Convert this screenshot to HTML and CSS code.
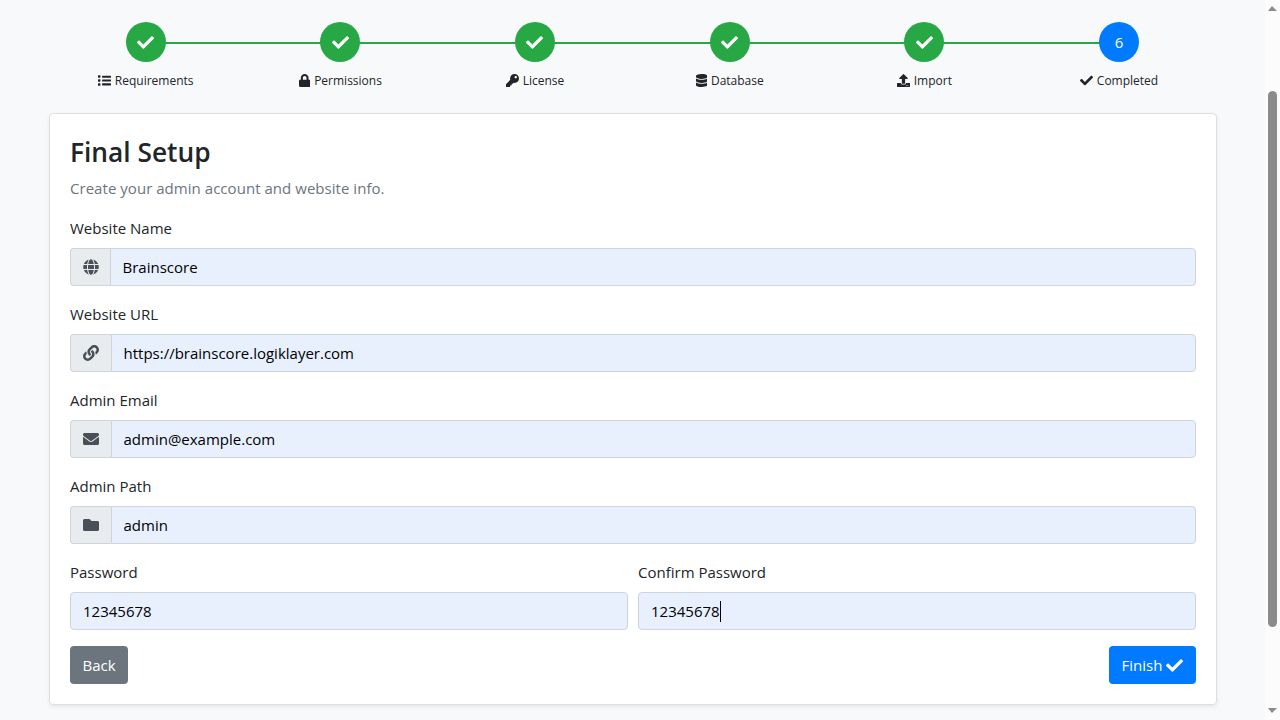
FILE: index.html
```html
<!DOCTYPE html>
<html lang="en">
<head>
  <meta charset="UTF-8" />
  <title>Final Setup</title>
  <link rel="stylesheet" href="styles.css">
</head>
<body>

  <!-- Icons -->
  <svg class="sprite" width="0" height="0">
    <symbol id="check" viewBox="0 0 512 512"><path d="M173.898 439.404l-166.4-166.4c-9.997-9.997-9.997-26.206 0-36.204l36.203-36.204c9.997-9.998 26.207-9.998 36.204 0L192 312.69 432.095 72.596c9.997-9.997 26.207-9.997 36.204 0l36.203 36.204c9.997 9.997 9.997 26.206 0 36.204l-294.4 294.401c-9.998 9.997-26.207 9.997-36.204-.001z"/></symbol>
    <symbol id="list" viewBox="0 0 512 512"><path d="M80 368H16a16 16 0 0 0-16 16v64a16 16 0 0 0 16 16h64a16 16 0 0 0 16-16v-64a16 16 0 0 0-16-16zm0-320H16A16 16 0 0 0 0 64v64a16 16 0 0 0 16 16h64a16 16 0 0 0 16-16V64a16 16 0 0 0-16-16zm0 160H16a16 16 0 0 0-16 16v64a16 16 0 0 0 16 16h64a16 16 0 0 0 16-16v-64a16 16 0 0 0-16-16zm416 160H176a16 16 0 0 0-16 16v48a16 16 0 0 0 16 16h320a16 16 0 0 0 16-16v-48a16 16 0 0 0-16-16zm0-304H176a16 16 0 0 0-16 16v48a16 16 0 0 0 16 16h320a16 16 0 0 0 16-16V80a16 16 0 0 0-16-16zm0 152H176a16 16 0 0 0-16 16v48a16 16 0 0 0 16 16h320a16 16 0 0 0 16-16v-48a16 16 0 0 0-16-16z"/></symbol>
    <symbol id="lock" viewBox="0 0 448 512"><path d="M400 224h-24v-72C376 68.2 307.8 0 224 0S72 68.2 72 152v72H48c-26.5 0-48 21.5-48 48v192c0 26.5 21.5 48 48 48h352c26.5 0 48-21.5 48-48V272c0-26.5-21.5-48-48-48zm-104 0H152v-72c0-39.7 32.3-72 72-72s72 32.3 72 72v72z"/></symbol>
    <symbol id="key" viewBox="0 0 512 512"><path d="M512 176.001C512 273.203 433.202 352 336 352c-11.22 0-22.19-1.062-32.827-3.069l-24.012 27.014A23.999 23.999 0 0 1 261.223 384H224v40c0 13.255-10.745 24-24 24h-40v40c0 13.255-10.745 24-24 24H24c-13.255 0-24-10.745-24-24v-78.059c0-6.365 2.529-12.47 7.029-16.971l161.802-161.802C163.108 213.814 160 195.271 160 176 160 78.798 238.797.001 335.999 0 433.488-.001 512 78.511 512 176.001zM336 128c0 26.51 21.49 48 48 48s48-21.49 48-48-21.49-48-48-48-48 21.49-48 48z"/></symbol>
    <symbol id="database" viewBox="0 0 448 512"><path d="M448 73.143v45.714C448 159.143 347.667 192 224 192S0 159.143 0 118.857V73.143C0 32.857 100.333 0 224 0s224 32.857 224 73.143zM448 176v102.857C448 319.143 347.667 352 224 352S0 319.143 0 278.857V176c48.125 33.143 136.208 48.572 224 48.572S399.874 209.143 448 176zm0 160v102.857C448 479.143 347.667 512 224 512S0 479.143 0 438.857V336c48.125 33.143 136.208 48.572 224 48.572S399.874 369.143 448 336z"/></symbol>
    <symbol id="upload" viewBox="0 0 512 512"><path d="M296 384h-80c-13.3 0-24-10.7-24-24V192h-87.7c-17.8 0-26.7-21.5-14.1-34.1L242.3 5.7c7.5-7.5 19.8-7.5 27.3 0l152.2 152.2c12.6 12.6 3.7 34.1-14.1 34.1H320v168c0 13.3-10.7 24-24 24zm216-8v112c0 13.3-10.7 24-24 24H24c-13.3 0-24-10.7-24-24V376c0-13.3 10.7-24 24-24h136v8c0 30.9 25.1 56 56 56h80c30.9 0 56-25.1 56-56v-8h136c13.3 0 24 10.7 24 24zm-124 88c0-11-9-20-20-20s-20 9-20 20 9 20 20 20 20-9 20-20zm64 0c0-11-9-20-20-20s-20 9-20 20 9 20 20 20 20-9 20-20z"/></symbol>
    <symbol id="globe" viewBox="0 0 496 512"><path d="M336.5 160C322 70.7 287.8 8 248 8s-74 62.7-88.5 152h177zM152 256c0 22.2 1.2 43.5 3.3 64h185.3c2.1-20.5 3.3-41.8 3.3-64s-1.2-43.5-3.3-64H155.3c-2.1 20.5-3.3 41.8-3.3 64zm324.7-96c-28.6-67.9-86.5-120.4-158-141.6 24.4 33.8 41.2 84.7 50 141.6h108zM177.2 18.4C105.8 39.6 47.8 92.1 19.3 160h108c8.7-56.9 25.5-107.8 49.9-141.6zM487.4 192H372.7c2.1 21 3.3 42.5 3.3 64s-1.2 43-3.3 64h114.6c5.5-20.5 8.6-41.8 8.6-64s-3.1-43.5-8.5-64zM120 256c0-21.5 1.2-43 3.3-64H8.6C3.2 212.5 0 233.8 0 256s3.2 43.5 8.6 64h114.6c-2-21-3.2-42.5-3.2-64zm39.5 96c14.5 89.3 48.7 152 88.5 152s74-62.7 88.5-152h-177zm159.3 141.6c71.4-21.2 129.4-73.7 158-141.6h-108c-8.8 56.9-25.6 107.8-50 141.6zM19.3 352c28.6 67.9 86.5 120.4 158 141.6-24.4-33.8-41.2-84.7-50-141.6h-108z"/></symbol>
    <symbol id="link" viewBox="0 0 512 512"><path d="M326.612 185.391c59.747 59.809 58.927 155.698.36 214.59-.11.12-.24.25-.36.37l-67.2 67.2c-59.27 59.27-155.699 59.262-214.96 0-59.27-59.26-59.27-155.7 0-214.96l37.106-37.106c9.84-9.84 26.786-3.3 27.294 10.606.648 17.722 3.826 35.527 9.69 52.721 1.986 5.822.567 12.262-3.783 16.612l-13.087 13.087c-28.026 28.026-28.905 73.66-1.155 101.96 28.024 28.579 74.086 28.749 102.325.51l67.2-67.19c28.191-28.191 28.073-73.757 0-101.83-3.701-3.694-7.429-6.564-10.341-8.569a16.037 16.037 0 0 1-6.947-12.606c-.396-10.567 3.348-21.456 11.698-29.806l21.054-21.055c5.521-5.521 14.182-6.199 20.584-1.731a152.482 152.482 0 0 1 20.522 17.197zM467.547 44.449c-59.261-59.262-155.69-59.27-214.96 0l-67.2 67.2c-.12.12-.25.25-.36.37-58.566 58.892-59.387 154.781.36 214.59a152.454 152.454 0 0 0 20.521 17.196c6.402 4.468 15.064 3.789 20.584-1.731l21.054-21.055c8.35-8.35 12.094-19.239 11.698-29.806a16.037 16.037 0 0 0-6.947-12.606c-2.912-2.005-6.64-4.875-10.341-8.569-28.073-28.073-28.191-73.639 0-101.83l67.2-67.19c28.239-28.239 74.3-28.069 102.325.51 27.75 28.3 26.872 73.934-1.155 101.96l-13.087 13.087c-4.35 4.35-5.769 10.79-3.783 16.612 5.864 17.194 9.042 34.999 9.69 52.721.509 13.906 17.454 20.446 27.294 10.606l37.106-37.106c59.271-59.259 59.271-155.699.001-214.959z"/></symbol>
    <symbol id="envelope" viewBox="0 0 512 512"><path d="M502.3 190.8c3.9-3.1 9.7-.2 9.7 4.7V400c0 26.5-21.5 48-48 48H48c-26.5 0-48-21.5-48-48V195.6c0-5 5.7-7.8 9.7-4.7 22.4 17.4 52.1 39.5 154.1 113.6 21.1 15.4 56.7 47.8 92.2 47.6 35.7.3 72-32.8 92.3-47.6 102-74.1 131.6-96.3 154-113.7zM256 320c23.2.4 56.6-29.2 73.4-41.4 132.7-96.3 142.8-104.7 173.4-128.7 5.8-4.5 9.2-11.5 9.2-18.9v-19c0-26.5-21.5-48-48-48H48c-26.5 0-48 21.5-48 48v19c0 7.4 3.4 14.3 9.2 18.9 30.6 23.9 40.7 32.4 173.4 128.7 16.8 12.2 50.2 41.8 73.4 41.4z"/></symbol>
    <symbol id="folder" viewBox="0 0 512 512"><path d="M464 128H272l-64-64H48C21.5 64 0 85.5 0 112v288c0 26.5 21.5 48 48 48h416c26.5 0 48-21.5 48-48V176c0-26.5-21.5-48-48-48z"/></symbol>
  </svg>

  <div class="page">
    <div class="container">

      <!-- Steps -->
      <div class="steps">
        <div class="step done">
          <div class="circle"><svg class="icon"><use href="#check"/></svg></div>
          <div class="step-label"><svg class="icon"><use href="#list"/></svg><span>Requirements</span></div>
        </div>
        <div class="step done">
          <div class="circle"><svg class="icon"><use href="#check"/></svg></div>
          <div class="step-label"><svg class="icon narrow"><use href="#lock"/></svg><span>Permissions</span></div>
        </div>
        <div class="step done">
          <div class="circle"><svg class="icon"><use href="#check"/></svg></div>
          <div class="step-label"><svg class="icon"><use href="#key"/></svg><span>License</span></div>
        </div>
        <div class="step done">
          <div class="circle"><svg class="icon"><use href="#check"/></svg></div>
          <div class="step-label"><svg class="icon narrow"><use href="#database"/></svg><span>Database</span></div>
        </div>
        <div class="step done">
          <div class="circle"><svg class="icon"><use href="#check"/></svg></div>
          <div class="step-label"><svg class="icon"><use href="#upload"/></svg><span>Import</span></div>
        </div>
        <div class="step active">
          <div class="circle"><span>6</span></div>
          <div class="step-label"><svg class="icon"><use href="#check"/></svg><span>Completed</span></div>
        </div>
      </div>

      <!-- Form -->
      <form class="card">
        <h3>Final Setup</h3>
        <p class="muted">Create your admin account and website info.</p>

        <div class="form-group">
          <label for="site-name">Website Name</label>
          <div class="input-group">
            <span class="addon addon-globe"><svg class="icon"><use href="#globe"/></svg></span>
            <input type="text" id="site-name" class="form-control" value="Brainscore" />
          </div>
        </div>
        <div class="form-group">
          <label for="site-url">Website URL</label>
          <div class="input-group">
            <span class="addon"><svg class="icon"><use href="#link"/></svg></span>
            <input type="text" id="site-url" class="form-control" value="https://brainscore.logiklayer.com" />
          </div>
        </div>
        <div class="form-group">
          <label for="email">Admin Email</label>
          <div class="input-group">
            <span class="addon"><svg class="icon"><use href="#envelope"/></svg></span>
            <input type="text" id="email" class="form-control" value="admin@example.com" />
          </div>
        </div>
        <div class="form-group">
          <label for="path">Admin Path</label>
          <div class="input-group">
            <span class="addon"><svg class="icon"><use href="#folder"/></svg></span>
            <input type="text" id="path" class="form-control" value="admin" />
          </div>
        </div>

        <div class="form-row">
          <div class="form-group">
            <label for="password">Password</label>
            <input type="text" id="password" class="form-control" value="12345678" />
          </div>
          <div class="form-group">
            <label>Confirm Password</label>
            <div class="form-control focused"><span>12345678</span><i class="caret"></i></div>
          </div>
        </div>

        <div class="actions">
          <button type="button" class="btn btn-secondary">Back</button>
          <button type="button" class="btn btn-primary"><span>Finish</span><svg class="icon"><use href="#check"/></svg></button>
        </div>
      </form>

    </div>
  </div>

  <!-- Scrollbar -->
  <div class="scrollbar">
    <div class="arrow up"></div>
    <div class="thumb"></div>
    <div class="arrow down"></div>
  </div>

</body>
</html>
```
FILE: styles.css
```css
* {
  box-sizing: border-box;
}

body {
  margin: 0;
  height: 720px;
  display: flex;
  overflow: hidden;
  background-color: #f8f9fb;
  color: #212529;
  font-family: "Open Sans", "Segoe UI", sans-serif;
  font-size: 15px;
  line-height: 24px;
}

.sprite {
  position: absolute;
}

.icon {
  width: 1em;
  height: 1em;
  fill: currentColor;
  flex-shrink: 0;
}

.icon.narrow {
  width: 0.875em;
}

.page {
  flex: 1;
  padding-top: 22px;
}

.container {
  width: 1168px;
  margin-left: 49px;
}

/* Steps */
.steps {
  display: flex;
  height: 91px;
  margin: 0 0.7px 0 -0.7px;
}

.step {
  flex: 1;
  display: flex;
  flex-direction: column;
  align-items: center;
  position: relative;
}

/* line to the next circle */
.step.done::after {
  content: "";
  position: absolute;
  top: 20px;
  left: 50%;
  width: 100%;
  height: 2px;
  background-color: #28a745;
}

.circle {
  width: 40px;
  height: 40px;
  border-radius: 50%;
  display: flex;
  align-items: center;
  justify-content: center;
  position: relative;
  z-index: 1;
  color: #fff;
  background-color: #28a745;
}

.circle .icon {
  font-size: 17px;
}

.active .circle {
  background-color: #007bff;
}

.step-label {
  display: flex;
  align-items: center;
  gap: 4px;
  margin-top: 8px;
  height: 20px;
  font-size: 12px;
  line-height: 20px;
}

.step-label .icon {
  font-size: 13px;
}

.step-label span {
  padding-top: 2px;
}

/* Card */
.card {
  height: 592px;
  padding: 20px;
  background-color: #fff;
  border: 1px solid #dfdfdf;
  border-radius: 4px;
  box-shadow: 0 2px 4px rgba(0, 0, 0, 0.075);
}

h3 {
  margin: 0 0 7px;
  padding-top: 1px;
  font-size: 26.3px;
  font-weight: 600;
  line-height: 34px;
}

.muted {
  margin: 0 0 16px;
  color: #6c757d;
  letter-spacing: 0.04px;
}

.form-group {
  margin-bottom: 16px;
}

label {
  display: block;
  margin-bottom: 8px;
}

.input-group {
  display: flex;
}

.addon {
  display: flex;
  align-items: center;
  width: 41px;
  padding-left: 11.5px;
  color: #495057;
  background-color: #e9ecef;
  border: 1px solid #ced4da;
  border-right: 0;
  border-radius: 4px 0 0 4px;
}

.addon .icon {
  font-size: 16px;
}

.addon-globe {
  width: 40px;
}

.form-control {
  width: 100%;
  height: 38px;
  padding: 6px 12px;
  border: 1px solid #ced4da;
  border-radius: 4px;
  background-color: #e8f0fe;
  color: #000;
  font-family: inherit;
  font-size: 15px;
  line-height: 24px;
}

.input-group .form-control {
  flex: 1;
  padding-left: 11.5px;
  border-radius: 0 4px 4px 0;
}

.form-row {
  display: grid;
  grid-template-columns: 1fr 1fr;
  gap: 10px;
}

.focused {
  display: flex;
  align-items: center;
}

.caret {
  width: 1px;
  height: 21px;
  background-color: #000;
}

/* Buttons */
.actions {
  display: flex;
  justify-content: space-between;
}

.btn {
  display: flex;
  align-items: center;
  justify-content: center;
  gap: 4px;
  height: 38px;
  padding: 0;
  border: 0;
  border-radius: 4px;
  color: #fff;
  font-family: inherit;
  font-size: 15px;
}

.btn .icon {
  font-size: 17px;
}

.btn-secondary {
  width: 58px;
  background-color: #6c757d;
}

.btn-primary {
  width: 87px;
  background-color: #007bff;
}

/* Scrollbar */
.scrollbar {
  width: 15px;
  display: flex;
  flex-direction: column;
  padding: 6px 0 7px 3px;
  background-color: #fcfcfc;
}

.arrow {
  width: 0;
  border-left: 4.5px solid transparent;
  border-right: 5px solid transparent;
}

.up {
  border-bottom: 5px solid #8b8b8b;
}

.down {
  margin-top: auto;
  border-top: 5px solid #8b8b8b;
}

.thumb {
  width: 9px;
  height: 536px;
  margin-top: 80px;
  border-radius: 5px;
  background-color: #8b8b8b;
}
```
